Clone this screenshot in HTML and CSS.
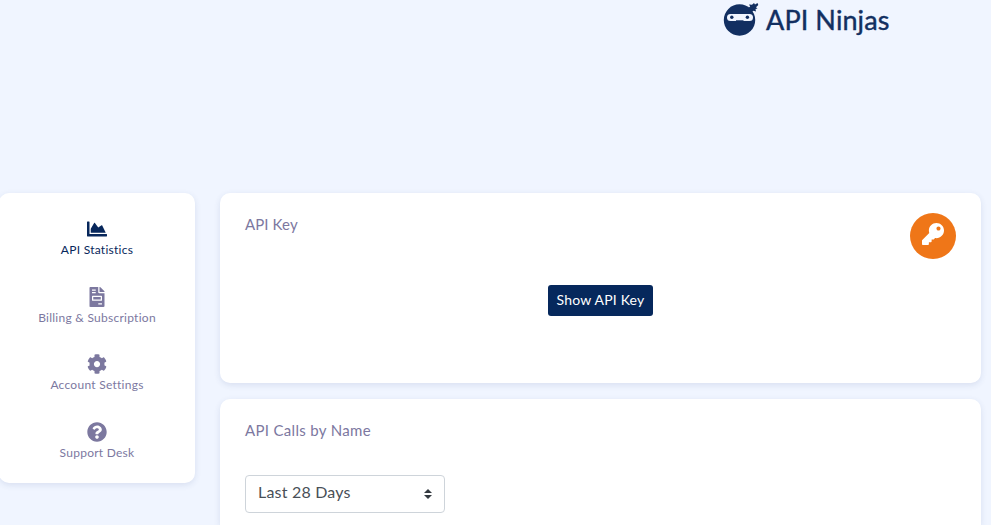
FILE: index.html
```html
<!DOCTYPE html>
<html lang="en">
<head>
<meta charset="utf-8">
<title>API Ninjas</title>
<link rel="stylesheet" href="styles.css">
</head>
<body>
<header class="header">
  <div class="brand">
    <svg class="brand-mark" viewBox="0 0 36 36" aria-hidden="true">
      <circle cx="16.500" cy="20" r="15.700"/>
      <path d="M24 9l3.200-2.500L26 4.500l3 .3L31 3l1 1.500L34.500 3l.8 2-2.300 2.200 1.500 1.300-2 .5.5 2.500-2.500-.7L27 13z"/>
      <rect class="mask" x="4" y="14" width="26" height="7" rx="3.500"/>
      <circle cx="8.800" cy="17.300" r="1.700"/><circle cx="24.400" cy="17.300" r="1.700"/>
      <rect x="13" y="20.300" width="7.500" height="1"/>
    </svg>
    <span class="brand-name">API Ninjas</span>
  </div>
</header>
<div class="layout">
  <nav class="sidebar">
    <a class="nav-item active">
      <svg class="icon" viewBox="0 0 512 512"><path d="M500 384c6.600 0 12 5.400 12 12v40c0 6.600-5.400 12-12 12H12c-6.600 0-12-5.400-12-12V76c0-6.600 5.400-12 12-12h40c6.600 0 12 5.400 12 12v308h436zM372.700 159.500L288 216l-85.300-113.700c-5.100-6.800-15.500-6.300-19.900 1L96 248v104h384l-89.900-187.800c-3.200-6.500-11.400-8.700-17.400-4.700z"/></svg>
      <span class="label">API Statistics</span>
    </a>
    <a class="nav-item">
      <svg class="icon" viewBox="-64 0 512 512"><path d="M288 256H96v64h192v-64zm89-151L279.100 7c-4.500-4.500-10.600-7-17-7H256v128h128v-6.100c0-6.300-2.500-12.400-7-16.900zm-153 31V0H24C10.700 0 0 10.700 0 24v464c0 13.300 10.700 24 24 24h336c13.300 0 24-10.700 24-24V160H248c-13.200 0-24-10.800-24-24zM64 72c0-4.420 3.580-8 8-8h80c4.420 0 8 3.580 8 8v16c0 4.420-3.580 8-8 8H72c-4.420 0-8-3.580-8-8V72zm0 64c0-4.420 3.580-8 8-8h80c4.420 0 8 3.580 8 8v16c0 4.420-3.580 8-8 8H72c-4.420 0-8-3.580-8-8v-16zm256 304c0 4.420-3.580 8-8 8h-80c-4.420 0-8-3.580-8-8v-16c0-4.420 3.580-8 8-8h80c4.420 0 8 3.580 8 8v16zm0-200v96c0 8.840-7.160 16-16 16H80c-8.840 0-16-7.160-16-16v-96c0-8.840 7.160-16 16-16h224c8.840 0 16 7.160 16 16z"/></svg>
      <span class="label">Billing &amp; Subscription</span>
    </a>
    <a class="nav-item">
      <svg class="icon" viewBox="0 0 512 512"><path d="M487.400 315.700l-42.600-24.600c4.300-23.200 4.300-47 0-70.200l42.600-24.600c4.900-2.800 7.100-8.600 5.500-14-11.100-35.600-30-67.800-54.700-94.600-3.800-4.100-10-5.100-14.800-2.300L380.800 110c-17.900-15.400-38.500-27.300-60.800-35.100V25.800c0-5.600-3.900-10.500-9.400-11.700-36.700-8.200-74.300-7.800-109.200 0-5.500 1.200-9.400 6.100-9.400 11.700V75c-22.200 7.900-42.800 19.800-60.800 35.100L88.700 85.500c-4.900-2.800-11-1.900-14.800 2.300-24.700 26.700-43.600 58.900-54.700 94.600-1.700 5.400.6 11.200 5.500 14L67.300 221c-4.300 23.200-4.300 47 0 70.200l-42.600 24.600c-4.900 2.800-7.100 8.600-5.500 14 11.100 35.600 30 67.800 54.700 94.600 3.800 4.100 10 5.100 14.800 2.300l42.600-24.600c17.900 15.400 38.500 27.300 60.800 35.100v49.200c0 5.600 3.900 10.500 9.400 11.700 36.700 8.200 74.300 7.800 109.200 0 5.500-1.200 9.400-6.100 9.400-11.700v-49.200c22.200-7.900 42.800-19.800 60.800-35.100l42.600 24.600c4.900 2.800 11 1.900 14.800-2.300 24.700-26.700 43.600-58.900 54.700-94.600 1.500-5.500-.7-11.300-5.600-14.100zM256 336c-44.100 0-80-35.900-80-80s35.900-80 80-80 80 35.900 80 80-35.900 80-80 80z"/></svg>
      <span class="label">Account Settings</span>
    </a>
    <a class="nav-item">
      <svg class="icon" viewBox="0 0 512 512"><path d="M504 256c0 136.997-111.043 248-248 248S8 392.997 8 256C8 119.083 119.043 8 256 8s248 111.083 248 248zM262.655 90c-54.497 0-89.255 22.957-116.549 63.758-3.536 5.286-2.353 12.415 2.715 16.258l34.699 26.310c5.205 3.947 12.621 3.008 16.665-2.122 17.864-22.658 30.113-35.797 57.303-35.797 20.429 0 45.698 13.148 45.698 32.958 0 14.976-12.363 22.667-32.534 33.976C247.128 238.528 216 254.941 216 296v4c0 6.627 5.373 12 12 12h56c6.627 0 12-5.373 12-12v-1.333c0-28.462 83.186-29.647 83.186-106.667 0-58.002-60.165-102-116.531-102zM256 338c-25.365 0-46 20.635-46 46 0 25.364 20.635 46 46 46s46-20.636 46-46c0-25.365-20.635-46-46-46z"/></svg>
      <span class="label">Support Desk</span>
    </a>
  </nav>
  <main class="content">
    <section class="card key-card">
      <div class="card-head">
        <h2 class="card-title key-title">API Key</h2>
        <div class="badge"><svg class="key-icon" viewBox="0 0 512 512"><path d="M512 176.001C512 273.203 433.202 352 336 352c-11.220 0-22.190-1.062-32.827-3.069l-24.012 27.014A23.999 23.999 0 0 1 261.223 384H224v40c0 13.255-10.745 24-24 24h-40v40c0 13.255-10.745 24-24 24H24c-13.255 0-24-10.745-24-24v-78.059c0-6.365 2.529-12.470 7.029-16.971l161.802-161.802C163.108 213.814 160 195.271 160 176 160 78.798 238.797.001 335.999 0 433.488-.001 512 78.511 512 176.001zM336 128c0 26.510 21.490 48 48 48s48-21.490 48-48-21.490-48-48-48-48 21.490-48 48z"/></svg></div>
      </div>
      <button class="show-key" type="button">Show API Key</button>
    </section>
    <section class="card calls-card">
      <h2 class="card-title">API Calls by Name</h2>
      <div class="select">
        <span class="select-value">Last 28 Days</span>
        <svg class="caret" viewBox="0 0 4 5"><path d="M2 0L0 2h4zm0 5L0 3h4z"/></svg>
      </div>
    </section>
  </main>
</div>
</body>
</html>
```
FILE: styles.css
```css
* { box-sizing: border-box; }
body {
  margin: 0;
  background: #f0f5ff;
  color: #7c789f;
  font-family: Lato, sans-serif;
}
.header {
  height: 193px;
  padding-right: 100px;
  display: flex;
  justify-content: flex-end;
  align-items: flex-start;
}
.brand { display: flex; gap: 7px; color: #122f61; }
.brand-mark { width: 36px; height: 36px; fill: #122f61; }
.brand-mark .mask { fill: #f0f5ff; }
.brand-name {
  width: 125px;
  font-size: 27px;
  line-height: 40px;
  letter-spacing: 0.1px;
  -webkit-text-stroke: 0.4px #122f61;
  white-space: nowrap;
}
.layout {
  display: grid;
  grid-template-columns: 196px 761px;
  column-gap: 25px;
  margin-left: -1px;
  align-items: start;
}
.sidebar, .card {
  background: #fff;
  border-radius: 10px;
  box-shadow: 0 2px 6px rgba(40, 65, 130, 0.12);
}
.sidebar {
  height: 290px;
  padding-top: 26px;
  display: flex;
  flex-direction: column;
}
.nav-item {
  flex: none;
  height: 67.5px;
  display: flex;
  flex-direction: column;
  align-items: center;
  gap: 3px;
}
.nav-item:last-child { height: 40px; }
.nav-item.active { color: #07275b; }
.icon { width: 20px; height: 20px; fill: currentColor; }
.label { font-size: 12px; line-height: 16px; letter-spacing: 0.26px; white-space: nowrap; }
.content { display: flex; flex-direction: column; gap: 16px; }
.card { padding: 20px 25px; }
.key-card { height: 190px; display: flex; flex-direction: column; align-items: center; }
.card-head { width: 100%; display: flex; justify-content: space-between; }
.card-title {
  margin: 0;
  font-size: 15px;
  line-height: 22px;
  font-weight: 400;
  letter-spacing: 0.32px;
}
.key-title { letter-spacing: 0.1px; }
.badge {
  width: 46px;
  height: 46px;
  border-radius: 50%;
  background: #ef7618;
  display: grid;
  place-items: center;
}
.key-icon { width: 22px; height: 22px; fill: #fff; margin-top: -4px; }
.show-key {
  width: 105px;
  height: 31px;
  margin-top: 26px;
  padding: 0 0 2px;
  border: 0;
  border-radius: 3px;
  background: #06285c;
  color: #fff;
  font: 14px/29px Lato, sans-serif;
  letter-spacing: 0.2px;
  white-space: nowrap;
}
.calls-card {
  height: 126px;
  padding-bottom: 0;
  border-radius: 10px 10px 0 0;
}
.select {
  width: 200px;
  height: 38px;
  margin-top: 34px;
  padding: 0 12px;
  border: 1px solid #ced4da;
  border-radius: 4px;
  display: flex;
  justify-content: space-between;
  align-items: center;
  color: #495057;
}
.select-value { font-size: 16px; line-height: 24px; letter-spacing: 0.2px; margin-top: -5px; }
.caret { width: 8px; height: 10px; fill: #343a40; }
```
